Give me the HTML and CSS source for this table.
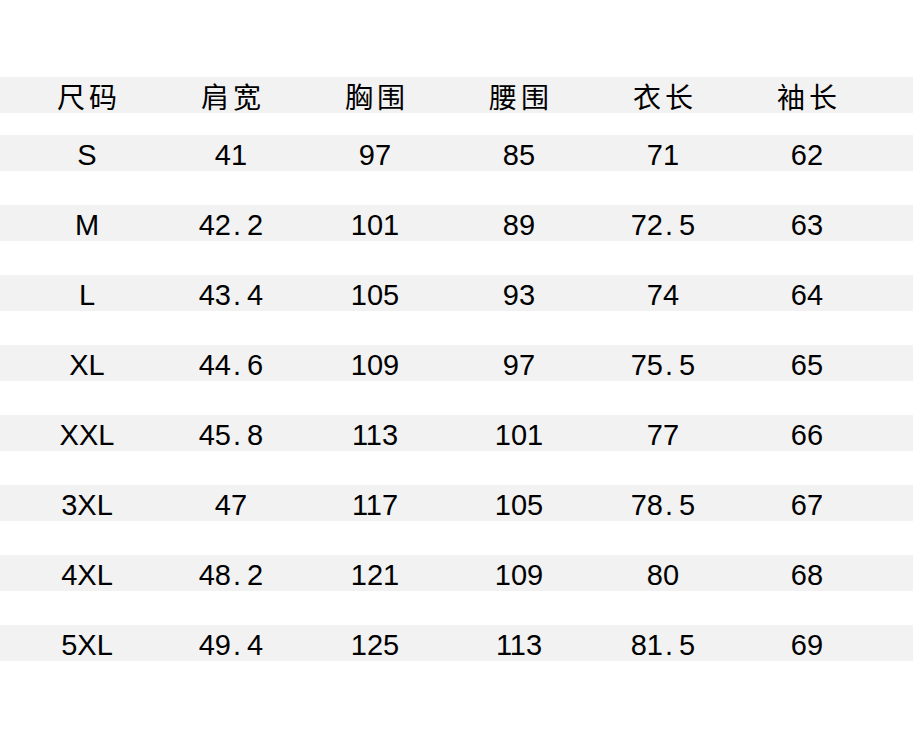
FILE: index.html
```html
<!DOCTYPE html>
<html lang="zh">
<head>
<meta charset="utf-8">
<title>尺码表</title>
<link rel="stylesheet" href="styles.css">
</head>
<body>
<div class="chart">
  <div class="row head">
    <div class="cell">尺码</div><div class="cell">肩宽</div><div class="cell">胸围</div><div class="cell">腰围</div><div class="cell">衣长</div><div class="cell">袖长</div>
  </div>
  <div class="rows">
    <div class="row"><div class="cell">S</div><div class="cell">41</div><div class="cell">97</div><div class="cell">85</div><div class="cell">71</div><div class="cell">62</div></div>
    <div class="row"><div class="cell">M</div><div class="cell">42<span class="dot">.</span>2</div><div class="cell">101</div><div class="cell">89</div><div class="cell">72<span class="dot">.</span>5</div><div class="cell">63</div></div>
    <div class="row"><div class="cell">L</div><div class="cell">43<span class="dot">.</span>4</div><div class="cell">105</div><div class="cell">93</div><div class="cell">74</div><div class="cell">64</div></div>
    <div class="row"><div class="cell">XL</div><div class="cell">44<span class="dot">.</span>6</div><div class="cell">109</div><div class="cell">97</div><div class="cell">75<span class="dot">.</span>5</div><div class="cell">65</div></div>
    <div class="row"><div class="cell">XXL</div><div class="cell">45<span class="dot">.</span>8</div><div class="cell">113</div><div class="cell">101</div><div class="cell">77</div><div class="cell">66</div></div>
    <div class="row"><div class="cell">3XL</div><div class="cell">47</div><div class="cell">117</div><div class="cell">105</div><div class="cell">78<span class="dot">.</span>5</div><div class="cell">67</div></div>
    <div class="row"><div class="cell">4XL</div><div class="cell">48<span class="dot">.</span>2</div><div class="cell">121</div><div class="cell">109</div><div class="cell">80</div><div class="cell">68</div></div>
    <div class="row"><div class="cell">5XL</div><div class="cell">49<span class="dot">.</span>4</div><div class="cell">125</div><div class="cell">113</div><div class="cell">81<span class="dot">.</span>5</div><div class="cell">69</div></div>
  </div>
</div>
</body>
</html>
```
FILE: styles.css
```css
html, body {
  margin: 0;
  padding: 0;
  background: #ffffff;
}
body {
  width: 913px;
  height: 752px;
  overflow: hidden;
  color: #000;
  font-family: "Liberation Sans", Arial, sans-serif;
}
.chart {
  padding-top: 77px;
  display: flex;
  flex-direction: column;
  gap: 22px;
}
.rows {
  display: flex;
  flex-direction: column;
  gap: 34px;
}
.row {
  height: 36px;
  background: #f2f2f2;
  display: grid;
  grid-template-columns: repeat(6, 144px);
  padding-left: 15px;
  align-items: center;
}
.cell {
  text-align: center;
  font-size: 29px;
  line-height: 36px;
  padding-top: 2px;
  white-space: nowrap;
}
.head .cell {
  font-family: "Noto Sans CJK SC", sans-serif;
  font-size: 28px;
  font-weight: 400;
  letter-spacing: 4px;
  text-indent: 4px;
  padding-top: 1px;
}
.dot {
  display: inline-block;
  width: 0.556em;
  text-align: left;
  padding-left: 2px;
  box-sizing: border-box;
}
```
